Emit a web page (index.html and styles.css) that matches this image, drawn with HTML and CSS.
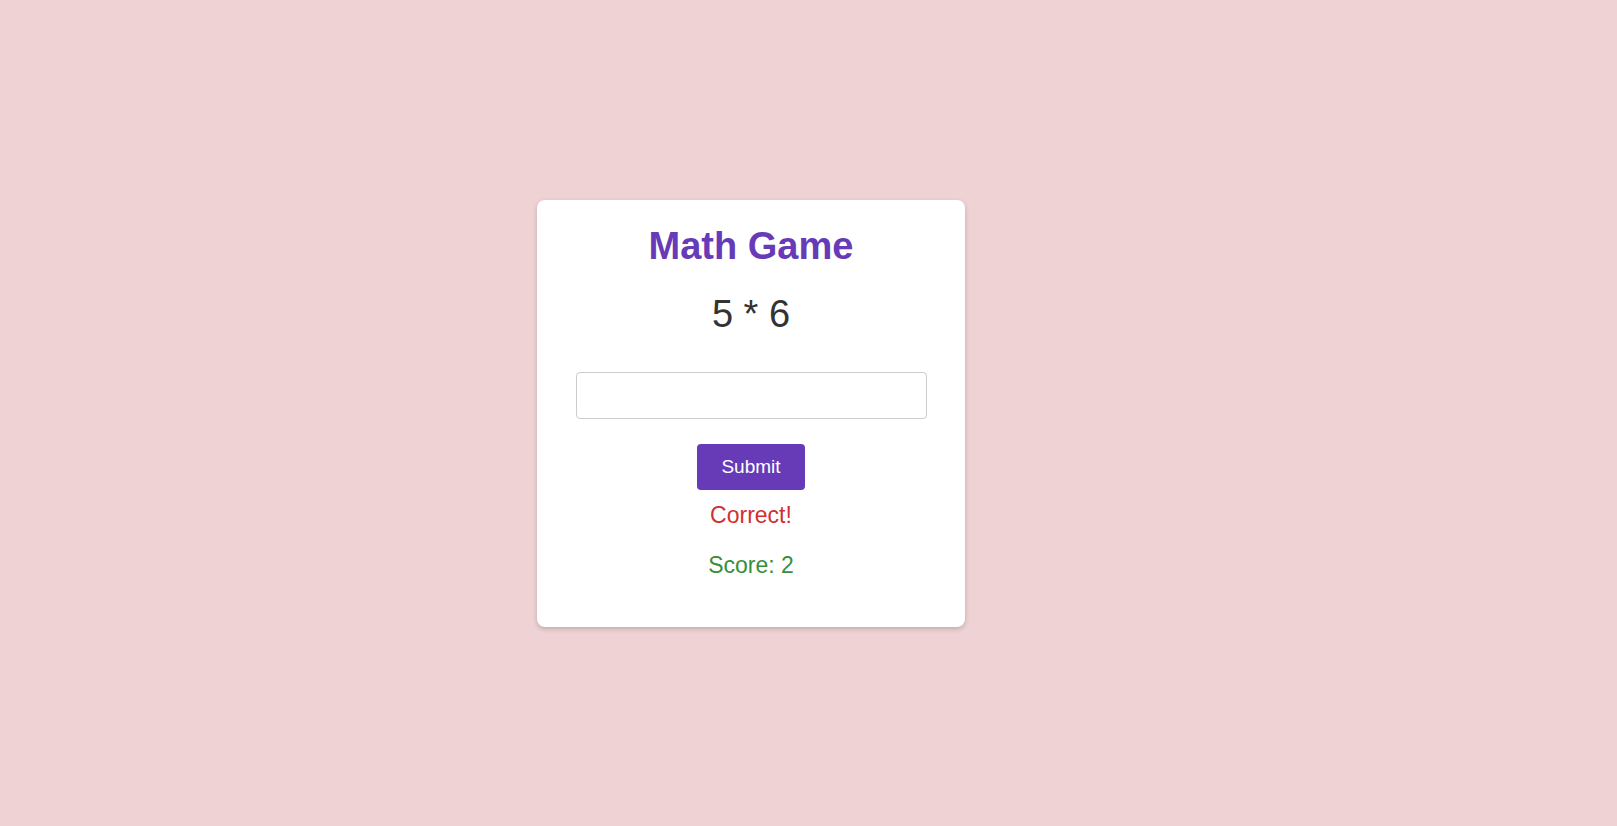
FILE: index.html
```html
<!DOCTYPE html>
<html>
<head>
<meta charset="utf-8">
<link rel="stylesheet" href="styles.css">
</head>
<body>
<div class="page">
  <div class="card">
    <h1 class="title">Math Game</h1>
    <div class="question">5 * 6</div>
    <input class="answer" type="text">
    <button class="submit">Submit</button>
    <div class="feedback">Correct!</div>
    <div class="score">Score: 2</div>
  </div>
</div>
</body>
</html>
```
FILE: styles.css
```css
html, body {
  margin: 0;
  padding: 0;
  height: 100%;
}
body {
  background: #efd3d4;
  font-family: "Liberation Sans", Arial, sans-serif;
}
.page {
  height: 100%;
  display: flex;
  align-items: center;
  justify-content: center;
  padding-right: 115px;
  box-sizing: border-box;
}
.card {
  width: 428px;
  height: 427px;
  box-sizing: border-box;
  background: #fff;
  border-radius: 8px;
  box-shadow: 0 2px 5px rgba(0, 0, 0, 0.2);
  display: flex;
  flex-direction: column;
  align-items: center;
  padding-top: 25px;
}
.title {
  margin: 0;
  font-size: 38px;
  line-height: 42px;
  font-weight: bold;
  color: #673ab7;
}
.question {
  margin-top: 26px;
  font-size: 38px;
  line-height: 42px;
  color: #333;
}
.answer {
  margin-top: 37px;
  width: 351px;
  height: 47px;
  box-sizing: border-box;
  border: 1px solid #ccc;
  border-radius: 4px;
  font-family: inherit;
  font-size: 19px;
  padding: 0 10px;
  outline: none;
}
.submit {
  margin-top: 25px;
  width: 108px;
  height: 46px;
  border: none;
  border-radius: 4px;
  background: #673ab7;
  color: #fff;
  font-family: inherit;
  font-size: 19px;
  cursor: pointer;
}
.feedback {
  margin-top: 12px;
  font-size: 23px;
  line-height: 26px;
  color: #d32f2f;
}
.score {
  margin-top: 24px;
  font-size: 23px;
  line-height: 26px;
  color: #388e3c;
}
```
